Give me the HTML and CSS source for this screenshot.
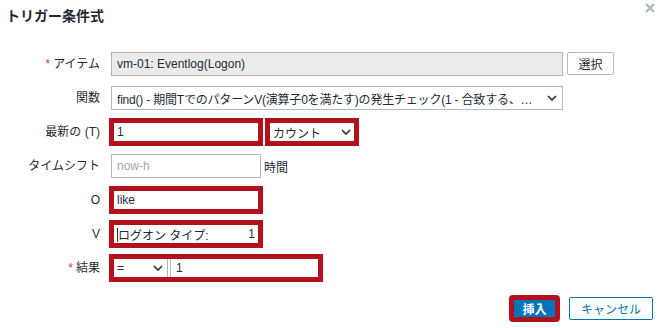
FILE: index.html
```html
<!DOCTYPE html>
<html lang="ja">
<head>
    <meta charset="UTF-8">
    <title>トリガー条件式</title>
    <link rel="stylesheet" href="styles.css">
</head>
<body>
    <div class="dialog">
        <div class="dialog-head">
            <h2>トリガー条件式</h2>
            <button class="btn-close" title="閉じる">
                <svg width="10" height="10" viewBox="0 0 10 10"><path d="M1 1L9 9M9 1L1 9" stroke="#a9b6bd" stroke-width="2"/></svg>
            </button>
        </div>

        <form class="form-grid">
            <label class="required">アイテム</label>
            <div class="field">
                <input class="input wide" type="text" value="vm-01: Eventlog(Logon)" readonly>
                <button type="button" class="btn-alt">選択</button>
            </div>

            <label>関数</label>
            <div class="field">
                <div class="select wide">
                    <span class="tight">find() - 期間TでのパターンV(演算子0を満たす)の発生チェック(1 - 合致する、…</span>
                    <svg width="10" height="6" viewBox="0 0 10 6"><path d="M1 1L5 5L9 1" fill="none" stroke="#1f2c33" stroke-width="1.6"/></svg>
                </div>
            </div>

            <label>最新の (T)</label>
            <div class="field">
                <input class="input mark" type="text" value="1">
                <div class="select count mark">
                    <span>カウント</span>
                    <svg width="10" height="6" viewBox="0 0 10 6"><path d="M1 1L5 5L9 1" fill="none" stroke="#1f2c33" stroke-width="1.6"/></svg>
                </div>
            </div>

            <label>タイムシフト</label>
            <div class="field">
                <input class="input" type="text" placeholder="now-h">
                <span class="unit">時間</span>
            </div>

            <label>O</label>
            <div class="field">
                <input class="input mark" type="text" value="like">
            </div>

            <label>V</label>
            <div class="field">
                <div class="input mark value-v"><span class="caret"></span>ログオン タイプ:<span>1</span></div>
            </div>

            <label class="required">結果</label>
            <div class="field">
                <div class="pair mark">
                    <div class="select small">
                        <span>=</span>
                        <svg width="10" height="6" viewBox="0 0 10 6"><path d="M1 1L5 5L9 1" fill="none" stroke="#1f2c33" stroke-width="1.6"/></svg>
                    </div>
                    <input class="input" type="text" value="1">
                </div>
            </div>
        </form>

        <div class="dialog-foot">
            <button class="btn mark">挿入</button>
            <button class="btn-outline">キャンセル</button>
        </div>
    </div>
</body>
</html>
```

FILE: styles.css
```css
* {
    margin: 0;
    padding: 0;
    box-sizing: border-box;
}

body {
    font-family: 'Liberation Sans', Arial, 'Noto Sans CJK JP', sans-serif;
    font-size: 12px;
    color: #1f2c33;
    background: white;
}

.dialog {
    width: 662px;
    height: 328px;
    padding: 0 9px 8px 6px;
}

.dialog-head {
    display: flex;
    justify-content: space-between;
    align-items: flex-start;
    height: 24px;
}

.dialog-head h2 {
    font-size: 14px;
    font-weight: bold;
    line-height: 16px;
    padding-top: 8px;
}

.btn-close {
    border: none;
    background: none;
    margin-top: 3px;
    margin-right: -2px;
    width: 10px;
    height: 10px;
    display: flex;
}

.form-grid {
    display: grid;
    grid-template-columns: 94px 1fr;
    grid-auto-rows: 24px;
    column-gap: 11px;
    row-gap: 10px;
    margin-top: 28px;
}

.form-grid label {
    text-align: right;
    line-height: 24px;
}

.form-grid label.required::before {
    content: '*';
    color: #e33734;
    margin-right: 3px;
}

.field {
    display: flex;
    align-items: center;
    gap: 4px;
}

.input {
    width: 150px;
    height: 24px;
    border: 1px solid #acbbc2;
    padding: 0 5px;
    font: inherit;
    color: #1f2c33;
    background: white;
    outline: none;
}

.input::placeholder {
    color: #a3a9ad;
}

.input[readonly] {
    background: #ebebeb;
}

.input.wide,
.select.wide {
    width: 452px;
}

.select {
    display: flex;
    align-items: center;
    justify-content: space-between;
    height: 24px;
    border: 1px solid #acbbc2;
    padding: 0 5px;
    background: white;
    white-space: nowrap;
    overflow: hidden;
}

.select span {
    overflow: hidden;
}

.select .tight {
    letter-spacing: -0.2px;
}

.select svg {
    flex-shrink: 0;
    margin-left: 8px;
}

.select.count {
    width: 90px;
    margin-left: 2px;
}

.select.small {
    width: 57px;
    padding-right: 4px;
}

.unit {
    margin-left: -1px;
}

.value-v {
    display: flex;
    align-items: center;
    justify-content: space-between;
    padding-left: 6px;
    padding-right: 5px;
    position: relative;
}

.caret {
    position: absolute;
    left: 5px;
    top: 5px;
    width: 1px;
    height: 14px;
    background: #1f2c33;
}

.pair {
    display: flex;
    gap: 2px;
}

.pair .input {
    width: 151px;
}

.mark {
    outline: 5px solid #b3121d;
    outline-offset: -3px;
}

.btn-alt {
    height: 23px;
    width: 47px;
    border: 1px solid #acbbc2;
    border-radius: 2px;
    background: white;
    font: inherit;
    color: #1f2c33;
    align-self: flex-start;
}

.dialog-foot {
    display: flex;
    justify-content: flex-end;
    gap: 11px;
    margin-top: 17px;
}

.btn,
.btn-outline {
    height: 23px;
    font: inherit;
    border-radius: 2px;
    padding: 0 10px;
}

.btn {
    width: 47px;
    background: #0275b8;
    border: 1px solid #0275b8;
    color: white;
    font-weight: bold;
}

.btn-outline {
    width: 84px;
    background: white;
    border: 1px solid #0275b8;
    color: #0275b8;
}
```
